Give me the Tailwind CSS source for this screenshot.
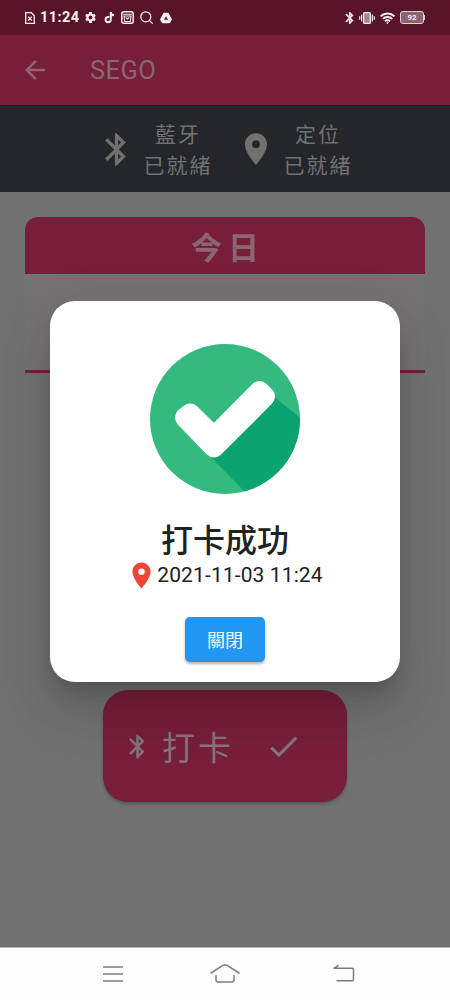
<!DOCTYPE html>
<html lang="zh-Hant">
<head>
<meta charset="utf-8">
<meta name="viewport" content="width=device-width, initial-scale=1">
<title>SEGO</title>
<script src="https://cdn.jsdelivr.net/npm/@tailwindcss/browser@4"></script>
</head>
<body class="font-['Roboto','Noto_Sans_CJK_TC',sans-serif]">
<svg class="hidden">
  <symbol id="bt" viewBox="0 0 24 24"><path fill="currentColor" d="M17.71 7.71 12 2h-1v7.59L6.41 5 5 6.41 10.59 12 5 17.59 6.41 19 11 14.41V22h1l5.71-5.71-4.3-4.29 4.3-4.29zM13 5.83l1.88 1.88L13 9.59V5.83zm1.88 10.46L13 18.17v-3.76l1.88 1.88z"/></symbol>
  <symbol id="pin" viewBox="0 0 24 24"><path fill="currentColor" d="M12 2C8.13 2 5 5.13 5 9c0 5.25 7 13 7 13s7-7.75 7-13c0-3.87-3.13-7-7-7zm0 9.5a2.5 2.5 0 1 1 0-5 2.5 2.5 0 0 1 0 5z"/></symbol>
</svg>
<div class="relative flex h-[1000px] w-[450px] flex-col overflow-hidden bg-[#717171]">
  <header class="shrink-0">
    <div class="flex h-[35px] items-center justify-between bg-[#581529] pr-[25px] pl-[24px] text-[#f6edf0]">
      <div class="flex items-center">
        <svg class="h-[14px] w-[12px]" viewBox="0 0 12 14" fill="none" stroke="currentColor" stroke-width="1.3"><path d="M1.7 1.7h5.6l3 3v7.6H1.7zM4.2 5.6l3.6 4M7.8 5.6l-3.6 4"/></svg>
        <span class="ml-[4px] w-[40px] text-[14.5px] leading-[20px] font-bold tracking-[0.4px] whitespace-nowrap">11:24</span>
        <svg class="ml-[4px] size-[13px]" viewBox="0 0 24 24" fill="currentColor"><path fill-rule="evenodd" d="M19.4 13a7 7 0 0 0 0-2l2.3-1.7-2.4-4-2.6 1.1A7 7 0 0 0 15 5.300L14.500 2h-5L9 5.300a7 7 0 0 0-1.700 1.100L4.700 5.300l-2.400 4L4.600 11a7 7 0 0 0 0 2l-2.300 1.700 2.400 4 2.600-1.100a7 7 0 0 0 1.700 1.100l.5 3.300h5l.5-3.300a7 7 0 0 0 1.700-1.100l2.600 1.100 2.400-4zM12 15.500a3.500 3.500 0 1 1 0-7 3.500 3.500 0 0 1 0 7z"/></svg>
        <svg class="ml-[7px] h-[13px] w-[11px]" viewBox="0 0 11 13" fill="none" stroke="currentColor" stroke-width="2"><path d="M5.300 6H4.200a2.600 2.600 0 1 0 2.600 2.600V1c0 1.900 1.300 3.200 3.200 3.300"/></svg>
        <svg class="ml-[6px] size-[13px]" viewBox="0 0 13 13" fill="none" stroke="currentColor"><rect x=".8" y=".8" width="11.400" height="11.400" rx="2" stroke-width="1.500"/><path stroke-width="1.100" d="M2 3.300h9M3 5h7l-.7 5.500H3.700zM4.800 6.500l1.700 1.500 1.700-1.500"/></svg>
        <svg class="ml-[6px] size-[13px]" viewBox="0 0 13 13" fill="none" stroke="currentColor" stroke-width="1.200"><circle cx="5.800" cy="5.800" r="5"/><path d="m9.400 9.400 3.300 3.300"/></svg>
        <svg class="ml-[7px] h-[12px] w-[12px]" viewBox="0 0 12 12"><path fill="currentColor" d="M4.300.8h3.400c.5 0 .9.300 1.100.7l2.900 5.300c.3.500.2.900 0 1.300l-1.400 2.500c-.3.400-.7.700-1.200.7H2.900c-.5 0-.9-.3-1.200-.7L.3 8.100C.1 7.700 0 7.300.3 6.800l2.900-5.300c.2-.4.600-.7 1.100-.7z"/><path fill="#581529" d="m6 4.200 2 3.600H4z"/></svg>
      </div>
      <div class="flex items-center">
        <svg class="h-[12px] w-[9px]" viewBox="4.500 2 14 20"><path fill="currentColor" stroke="currentColor" stroke-width=".8" d="M17.710 7.710 12 2h-1v7.590L6.410 5 5 6.410 10.590 12 5 17.590 6.410 19 11 14.410V22h1l5.710-5.710-4.300-4.290 4.300-4.290zM13 5.830l1.880 1.880L13 9.590V5.830zm1.880 10.460L13 18.170v-3.760l1.880 1.880z"/></svg>
        <svg class="ml-[5px] h-[12px] w-[16px]" viewBox="0 0 16 12" fill="none" stroke="currentColor" stroke-width="1.200"><rect x="4.600" y=".6" width="6.800" height="10.800" rx="1" fill="#a58592"/><path d="M2.700 2.500v7M.7 4.300v3.400M13.300 2.500v7M15.300 4.300v3.400"/></svg>
        <svg class="ml-[5px] h-[12px] w-[15px]" viewBox="0 0 15 12" fill="none" stroke="currentColor" stroke-width="1.900"><path d="M.6 4.300a9.800 9.800 0 0 1 13.800 0M2.800 6.900a6.700 6.700 0 0 1 9.400 0M5 9.300a3.600 3.600 0 0 1 5 0"/><circle cx="7.500" cy="10.800" r=".7" stroke-width="1"/></svg>
        <div class="ml-[5px] flex h-[13px] w-[24px] items-center justify-center rounded-[3px] border border-[#e3d0d7] bg-[#8b6470] text-[8px] leading-none font-bold">92</div><div class="h-[5px] w-px bg-[#d5bfc8]"></div>
      </div>
    </div>
    <div class="flex h-[70px] items-center bg-[#771e3a] pl-[25px] text-[#8b6572]">
      <svg class="size-[20px]" viewBox="4 4 16 16"><path fill="currentColor" d="M20 11H7.830l5.590-5.590L12 4l-8 8 8 8 1.410-1.410L7.830 13H20v-2z"/></svg>
      <h1 class="ml-[45px] text-[25.5px] leading-[30px] tracking-[0.4px]">SEGO</h1>
    </div>
  </header>
  <section class="flex h-[87px] shrink-0 border-t border-[#211b1f] bg-[#242629] pl-[97px] text-[21px] leading-[31px] tracking-[2px] text-[#6f7175]">
    <div class="flex w-[140px] items-center">
      <svg class="size-[39px] text-[#717171]"><use href="#bt"/></svg>
      <div class="ml-[4px] w-[76px] pt-[4px] text-center whitespace-nowrap"><p>藍牙</p><p>已就緒</p></div>
    </div>
    <div class="flex items-center">
      <svg class="size-[38px] text-[#717171]"><use href="#pin"/></svg>
      <div class="ml-[5px] w-[76px] pt-[4px] text-center whitespace-nowrap"><p>定位</p><p>已就緒</p></div>
    </div>
  </section>
  <main class="flex flex-1 flex-col items-center pt-[25px]">
    <section class="w-[400px]">
      <h2 class="flex h-[57px] items-center justify-center rounded-t-[13px] bg-[#771e3a] pt-[8px] pl-[6px] text-[31px] font-bold tracking-[6px] text-[#8b6572]">今日</h2>
      <div class="h-[99px] border-b-3 border-[#771e3a] bg-[#757273]"></div>
    </section>
    <div class="mt-[317px] flex h-[112px] w-[244px] items-center rounded-[25px] bg-[#771e3a] pl-[20px] text-[#85747b] shadow-[0_2px_3px_rgb(0_0_0/0.25)]">
      <svg class="size-[29px]"><use href="#bt"/></svg>
      <span class="ml-[10px] w-[72px] pt-[5px] text-[33px] leading-[44px] tracking-[3px] whitespace-nowrap">打卡</span>
      <svg class="ml-[31px] size-[37px]" viewBox="0 0 24 24"><path fill="currentColor" d="M9 16.170 4.830 12l-1.420 1.410L9 19 21 7l-1.410-1.410z"/></svg>
    </div>
  </main>
  <nav class="flex h-[53px] shrink-0 items-center justify-center gap-[86px] border-t border-[#b5b5b5] bg-[#fefefe] pl-[6px] text-[#7c7c7c]">
    <svg class="h-[20px] w-[22px]" viewBox="0 0 22 20" fill="none" stroke="currentColor" stroke-width="1.500"><path d="M1 3h20M1 10h20M1 17h20"/></svg>
    <svg class="h-[20px] w-[30px]" viewBox="0 0 30 20" fill="none" stroke="currentColor" stroke-width="1.500" stroke-linecap="round" stroke-linejoin="round"><path d="M1 9 12.500 1.700q2.500-1.600 5 0L29 9M6 11.500v4.500q0 2 2 2h14q2 0 2-2v-4.500"/></svg>
    <svg class="ml-[6px] h-[20px] w-[23px]" viewBox="0 0 23 20" fill="none" stroke="currentColor" stroke-width="1.500" stroke-linejoin="round"><path d="M6.500 1.500 2 4.200h18q1.500 0 1.500 1.500v9.500q0 1.500-1.500 1.500H4.500"/></svg>
  </nav>
  <div role="dialog" class="absolute top-[301px] left-[50px] flex h-[381px] w-[350px] flex-col items-center rounded-[25px] bg-white pt-[43px] text-[#212121] shadow-[0_14px_19px_-9px_rgb(0_0_0/0.2),0_30px_48px_4px_rgb(0_0_0/0.12),0_11px_58px_10px_rgb(0_0_0/0.04)]">
    <svg class="size-[150px] shrink-0" viewBox="0 0 150 150">
      <defs><clipPath id="disc"><circle cx="75" cy="75" r="75"/></clipPath></defs>
      <g clip-path="url(#disc)"><path fill="#34ba7f" d="M0 0h150v150H0z"/><path fill="#0ba36f" d="M56 108 98 151H160V82L122 51z"/></g>
      <path fill="#fff" stroke="#fff" stroke-width="20" stroke-linejoin="round" d="m35 73.500 5-4L64 93l45.500-46 5.500 5.500-51 51z"/>
    </svg>
    <h3 class="mt-[23px] text-[32px] leading-[48px] font-medium">打卡成功</h3>
    <div class="flex h-[22px] items-center pr-px pb-[2px]">
      <svg class="size-[31px] text-[#f44336]"><use href="#pin"/></svg>
      <span class="text-[21px] leading-[24px] tracking-[0.12px] whitespace-nowrap">2021-11-03 11:24</span>
    </div>
    <button class="mt-[30px] h-[45px] w-[80px] shrink-0 rounded-[5px] bg-[#2196f3] pt-[3px] text-[18px] leading-none text-white shadow-[0_2px_3px_rgb(0_0_0/0.3)]">關閉</button>
  </div>
</div>
</body>
</html>
